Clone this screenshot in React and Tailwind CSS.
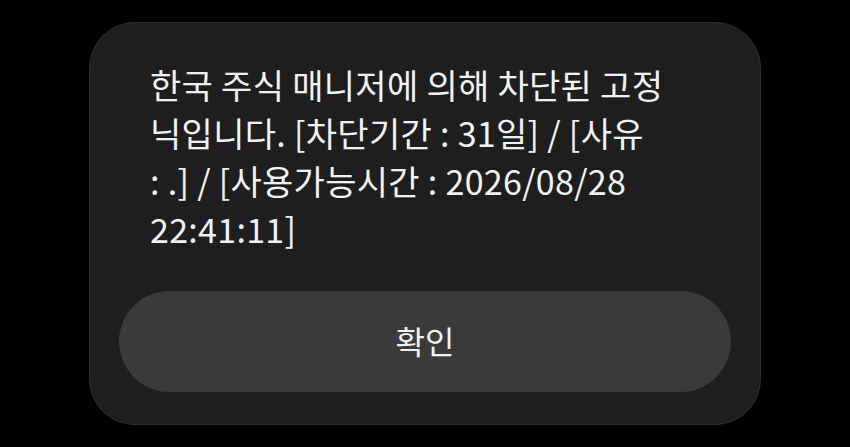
const lines = [
  '한국 주식 매니저에 의해 차단된 고정',
  '닉입니다. [차단기간 : 31일] / [사유',
  ': .] / [사용가능시간 : 2026/08/28',
  '22:41:11]',
];

export default function App() {
  return (
    <div
      className="w-[850px] h-[447px] bg-black flex items-center justify-center"
      style={{ fontFamily: '"Noto Sans CJK KR", "Noto Sans", sans-serif' }}
    >
      <div className="w-[672px] h-[403px] rounded-[46px] bg-[#1e1e1e] border border-[#2e2e2e] flex flex-col">
        <div className="pl-[60px] pt-[38px] text-[34px] leading-[48px] text-[#f2f2f2] tracking-[0.3px]">
          {lines.map((line, i) => (
            <div key={i} className="whitespace-nowrap">
              {line}
            </div>
          ))}
        </div>
        <div className="mt-auto px-[29px] pb-[32px]">
          <button className="w-full h-[101px] rounded-full bg-[#3a3a3a] text-[32px] text-[#f2f2f2] flex items-center justify-center pb-[4px]">
            확인
          </button>
        </div>
      </div>
    </div>
  );
}
